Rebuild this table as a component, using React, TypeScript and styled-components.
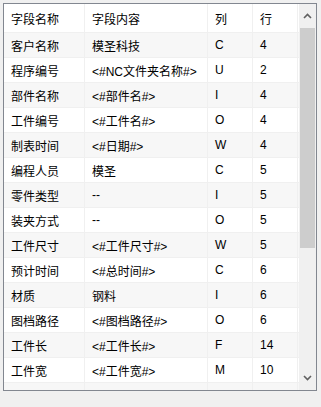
import styled, { createGlobalStyle } from 'styled-components';

const GlobalStyle = createGlobalStyle`
  body {
    margin: 0;
    background: #f0f0f0;
    font-family: "Liberation Sans", "Noto Sans CJK SC", sans-serif;
  }
`;

const rows: [string, string, string, string][] = [
  ['客户名称', '模圣科技', 'C', '4'],
  ['程序编号', '<#NC文件夹名称#>', 'U', '2'],
  ['部件名称', '<#部件名#>', 'I', '4'],
  ['工件编号', '<#工件名#>', 'O', '4'],
  ['制表时间', '<#日期#>', 'W', '4'],
  ['编程人员', '模圣', 'C', '5'],
  ['零件类型', '--', 'I', '5'],
  ['装夹方式', '--', 'O', '5'],
  ['工件尺寸', '<#工件尺寸#>', 'W', '5'],
  ['预计时间', '<#总时间#>', 'C', '6'],
  ['材质', '钢料', 'I', '6'],
  ['图档路径', '<#图档路径#>', 'O', '6'],
  ['工件长', '<#工件长#>', 'F', '14'],
  ['工件宽', '<#工件宽#>', 'M', '10'],
  ['', '', '', ''],
];

const App = () => {
  return (
    <>
      <GlobalStyle />
      <Frame>
        <Grid>
          <Row $header>
            <Cell>字段名称</Cell>
            <Cell>字段内容</Cell>
            <Cell>列</Cell>
            <Cell>行</Cell>
          </Row>
          {rows.map((r, i) => (
            <Row key={i} $shade={i % 2 === 0}>
              {r.map((c, j) => (
                <Cell key={j}>{c}</Cell>
              ))}
            </Row>
          ))}
        </Grid>
        <ScrollBar>
          <Arrow>
            <svg width="9" height="6" viewBox="0 0 9 6">
              <path d="M1 5 L4.5 1.5 L8 5" fill="none" stroke="#606060" strokeWidth="1.6" />
            </svg>
          </Arrow>
          <Track>
            <Thumb />
          </Track>
          <Arrow>
            <svg width="9" height="6" viewBox="0 0 9 6">
              <path d="M1 1 L4.5 4.5 L8 1" fill="none" stroke="#606060" strokeWidth="1.6" />
            </svg>
          </Arrow>
        </ScrollBar>
      </Frame>
    </>
  );
};

export default App;

const Frame = styled.div`
  margin: 3px;
  width: 312px;
  height: 386px;
  border: 1px solid #828790;
  background: #fff;
  display: flex;
  overflow: hidden;
`;

const Grid = styled.div`
  flex: 1;
  display: flex;
  flex-direction: column;
  overflow: hidden;
`;

const Row = styled.div<{ $header?: boolean; $shade?: boolean }>`
  display: grid;
  grid-template-columns: 81px 123px 45px 45px;
  height: ${(p) => (p.$header ? '29px' : '25px')};
  flex-shrink: 0;
  background: ${(p) => (p.$shade ? '#f7f7f7' : '#fff')};
  border-bottom: 1px solid #f0f0f0;
  box-sizing: border-box;
  font-size: 12px;
  color: #000;
`;

const Cell = styled.div`
  display: flex;
  align-items: center;
  padding-left: 7px;
  border-right: 1px solid #f0f0f0;
  white-space: nowrap;
  overflow: hidden;
`;

const ScrollBar = styled.div`
  width: 17px;
  display: flex;
  flex-direction: column;
  background: #f0f0f0;
`;

const Arrow = styled.div`
  height: 24px;
  display: flex;
  align-items: center;
  justify-content: center;
`;

const Track = styled.div`
  flex: 1;
  padding: 0 1px;
`;

const Thumb = styled.div`
  height: 220px;
  background: #cdcdcd;
`;
